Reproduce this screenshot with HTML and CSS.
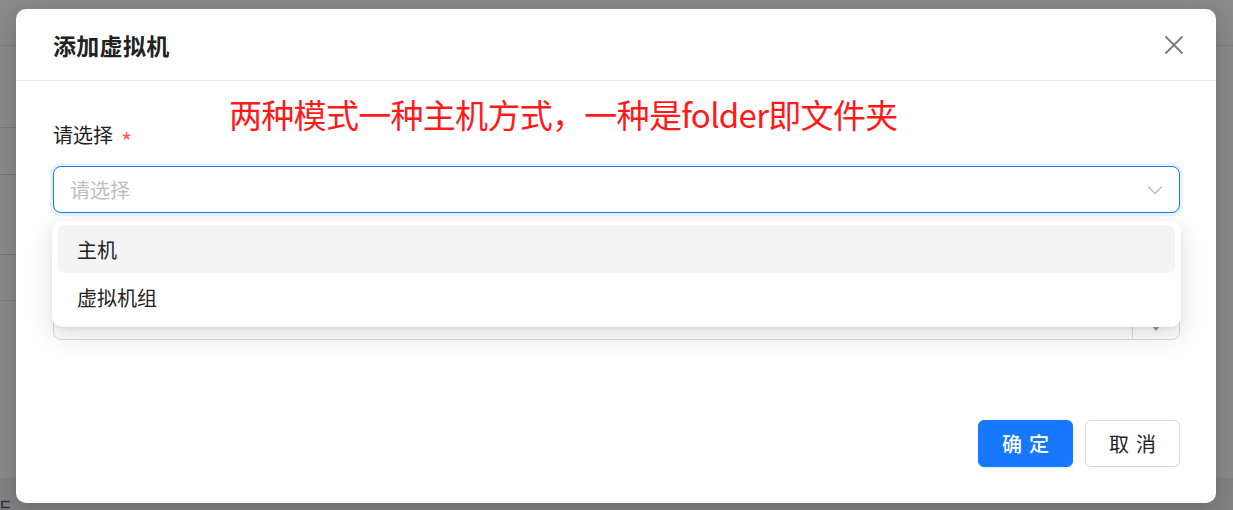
FILE: index.html
```html
<!doctype html>
<html lang="zh-CN">
  <head>
    <meta charset="UTF-8" />
    <meta name="viewport" content="width=device-width, initial-scale=1.0" />
    <title>添加虚拟机</title>
    <link rel="stylesheet" href="styles.css">
  </head>
  <body>
    <!-- page behind the mask -->
    <div class="page">
      <div class="page-head"></div>
      <div class="page-rows">
        <div class="page-row h82"></div>
        <div class="page-row h47"></div>
        <div class="page-row h80"></div>
        <div class="page-row h46"></div>
      </div>
      <div class="page-foot"><span class="foot-mark">⊏</span></div>
    </div>

    <div class="modal">
      <div class="modal-header">
        <div class="modal-title">添加虚拟机</div>
        <button class="modal-close" aria-label="close">
          <svg width="20" height="20" viewBox="0 0 20 20">
            <path d="M2 2 L18 18 M18 2 L2 18" stroke="#7a7a7a" stroke-width="1.8" fill="none" stroke-linecap="round" />
          </svg>
        </button>
      </div>

      <div class="modal-body">
        <div class="note">两种模式一种主机方式，一种是folder即文件夹</div>

        <div class="form-item first">
          <label class="form-label">请选择 <span class="required">*</span></label>
          <div class="select-wrap">
            <div class="select focused">
              <span class="placeholder">请选择</span>
              <svg class="chevron" width="16" height="10" viewBox="0 0 16 10">
                <path d="M1 1.5 L8 8.5 L15 1.5" stroke="#bfbfbf" stroke-width="1.5" fill="none" />
              </svg>
            </div>
            <div class="dropdown">
              <div class="option active">主机</div>
              <div class="option">虚拟机组</div>
            </div>
          </div>
        </div>

        <div class="form-item">
          <div class="number-input">
            <span class="placeholder dim">请输入虚拟机数量</span>
            <div class="handlers">
              <span class="handler">
                <svg width="8" height="5" viewBox="0 0 8 5"><path d="M0 5 L4 0 L8 5 Z" fill="#9a9a9a" /></svg>
              </span>
              <span class="handler">
                <svg width="8" height="5" viewBox="0 0 8 5"><path d="M0 0 L4 5 L8 0 Z" fill="#9a9a9a" /></svg>
              </span>
            </div>
          </div>
        </div>
      </div>

      <div class="modal-footer">
        <button class="btn btn-primary"><span>确定</span></button>
        <button class="btn btn-default"><span>取消</span></button>
      </div>
    </div>
  </body>
</html>
```

FILE: styles.css
```css
* {
  box-sizing: border-box;
}
html,
body {
  margin: 0;
  height: 100%;
}
body {
  background: #8a8a8a;
  font-family: "Noto Sans CJK SC", "Noto Sans", sans-serif;
  overflow: hidden;
  position: relative;
}

/* background page, seen through the mask */
.page {
  height: 510px;
  display: flex;
  flex-direction: column;
}
.page-head {
  height: 46px;
  border-bottom: 1px solid #7c7c7c;
}
.page-rows {
  flex: 1;
  width: 1210px;
}
.page-row {
  border-bottom: 1px solid #777;
}
.h82 { height: 82px; }
.h47 { height: 47px; }
.h80 { height: 80px; }
.h46 { height: 46px; }
.page-foot {
  height: 32px;
  background: #838383;
  position: relative;
}
.foot-mark {
  position: absolute;
  left: 0;
  top: 18px;
  font-size: 13px;
  line-height: 14px;
  color: #2a3442;
  font-weight: 700;
}

/* modal */
.modal {
  position: absolute;
  left: 16px;
  top: 9px;
  width: 1200px;
  height: 494px;
  background: #fff;
  border-radius: 10px;
  box-shadow: 0 6px 16px rgba(0, 0, 0, 0.1), 0 9px 28px 8px rgba(0, 0, 0, 0.06);
  display: flex;
  flex-direction: column;
}
.modal-header {
  height: 72px;
  border-bottom: 1px solid #e6e9ee;
  display: flex;
  align-items: center;
  justify-content: space-between;
  padding: 0 32px 0 37px;
}
.modal-title {
  font-size: 23px;
  font-weight: 700;
  color: #222;
  letter-spacing: 0.3px;
}
.modal-close {
  border: none;
  background: none;
  padding: 0;
  width: 20px;
  height: 20px;
  display: flex;
  cursor: pointer;
}

.modal-body {
  flex: 1;
  padding: 40px 36px 0 37px;
  position: relative;
}
.note {
  position: absolute;
  left: 213px;
  top: 9px;
  font-size: 33px;
  color: #ff1a1a;
  font-family: "Noto Sans CJK SC", sans-serif;
  letter-spacing: -0.7px;
}

.form-item {
  display: flex;
  flex-direction: column;
}
.form-item.first {
  margin-bottom: 80px;
}
.form-label {
  font-size: 20px;
  height: 28px;
  line-height: 28px;
  color: #222;
  margin-bottom: 17px;
  display: flex;
  align-items: center;
}
.required {
  color: #ff5b5d;
  font-size: 24px;
  line-height: 20px;
  height: 28px;
  margin-left: 8px;
  padding-top: 10px;
}

.select-wrap {
  position: relative;
}
.select {
  height: 47px;
  border: 1px solid #d9d9d9;
  border-radius: 8px;
  display: flex;
  align-items: center;
  justify-content: space-between;
  padding: 0 16px;
  background: #fff;
}
.select.focused {
  border-color: #1677ff;
  box-shadow: 0 0 0 3px rgba(5, 145, 255, 0.1);
}
.placeholder {
  font-size: 20px;
  color: #bfbfbf;
}
.placeholder.dim {
  color: #c4c4c4;
  padding-left: 10px;
}

.dropdown {
  position: absolute;
  top: 55px;
  left: -1px;
  right: -1px;
  background: #fff;
  border-radius: 10px;
  padding: 4px 6px 6px;
  z-index: 2;
  box-shadow: 0 6px 16px 0 rgba(0, 0, 0, 0.08), 0 3px 6px -4px rgba(0, 0, 0, 0.12), 0 9px 28px 8px rgba(0, 0, 0, 0.05);
}
.option {
  height: 48px;
  display: flex;
  align-items: center;
  padding: 0 19px;
  font-size: 20px;
  color: #222;
  border-radius: 6px;
}
.option.active {
  background: #f4f4f4;
}

.number-input {
  height: 47px;
  border: 1px solid #d9d9d9;
  border-radius: 8px;
  display: flex;
  align-items: center;
  justify-content: space-between;
  padding-left: 16px;
}
.handlers {
  width: 47px;
  height: 100%;
  border-left: 1px solid #d9d9d9;
  display: flex;
  flex-direction: column;
}
.handler {
  flex: 1;
  display: flex;
  align-items: center;
  justify-content: center;
}
.handler + .handler {
  border-top: 1px solid #d9d9d9;
}

.modal-footer {
  display: flex;
  justify-content: flex-end;
  gap: 12px;
  padding: 0 36px 36px 0;
}
.btn {
  width: 95px;
  height: 47px;
  border-radius: 6px;
  font-size: 20px;
  font-family: "Noto Sans CJK SC", sans-serif;
  cursor: pointer;
  display: flex;
  align-items: center;
  justify-content: center;
  padding: 0;
}
.btn span {
  letter-spacing: 0.36em;
  margin-right: -0.36em;
}
.btn-primary {
  background: #1677ff;
  border: 1px solid #1677ff;
  color: #fff;
  font-weight: 500;
  box-shadow: 0 2px 0 rgba(5, 145, 255, 0.1);
}
.btn-default {
  background: #fff;
  border: 1px solid #d9d9d9;
  color: #222;
  box-shadow: 0 2px 0 rgba(0, 0, 0, 0.02);
}
```
